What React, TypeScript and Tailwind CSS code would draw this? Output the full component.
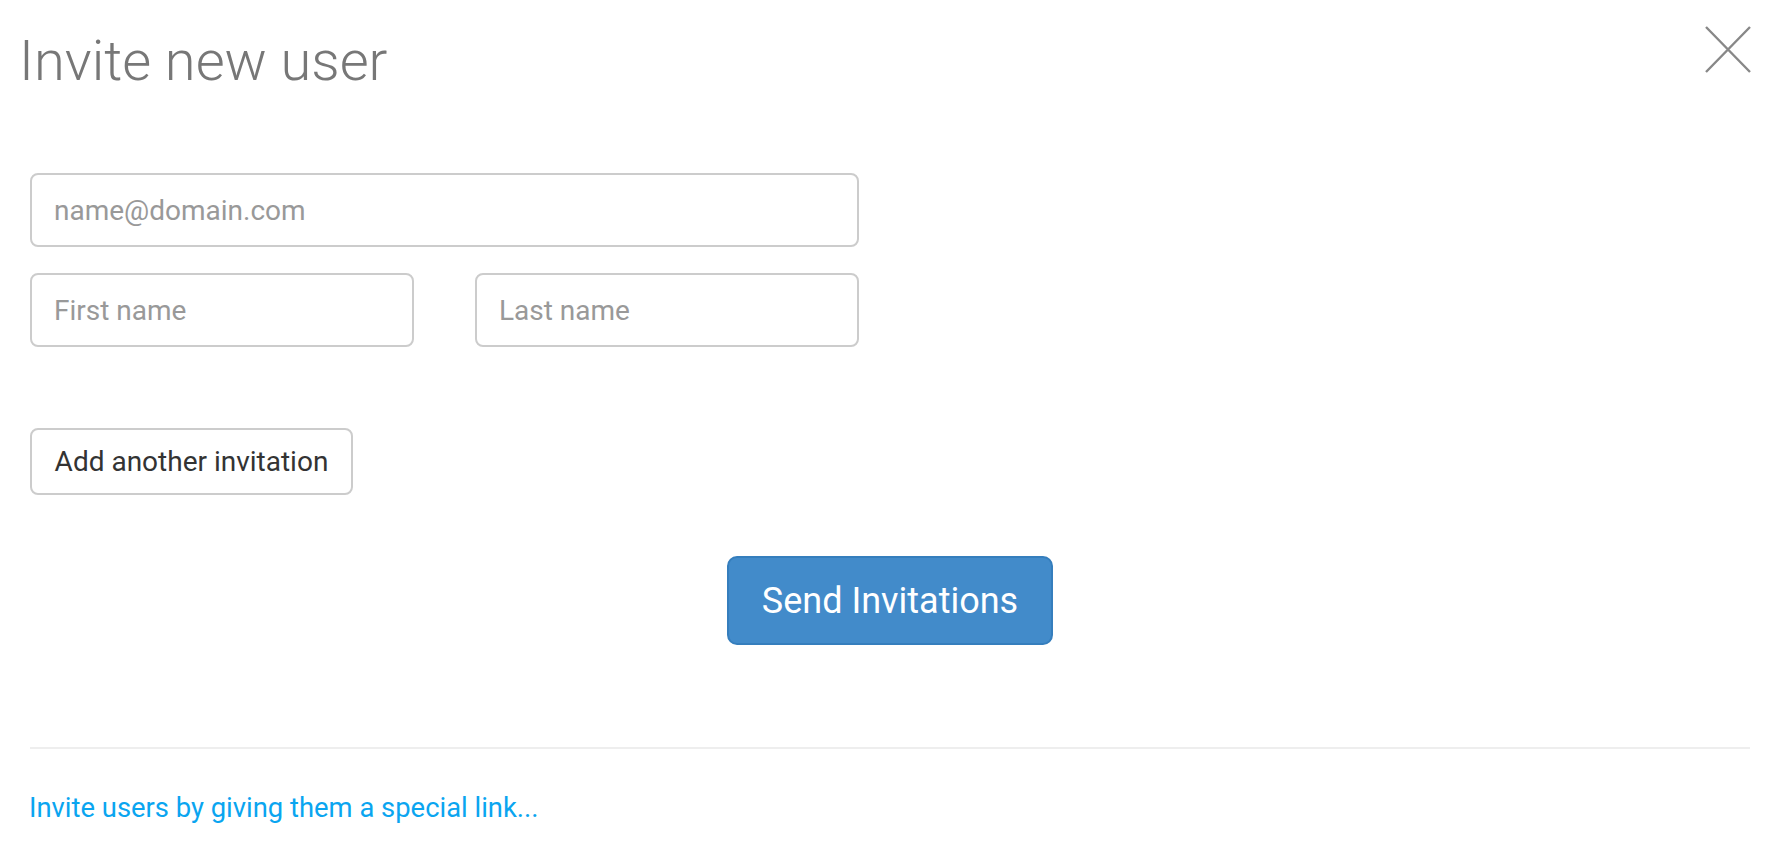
import React from "react";

export default function App() {
  return (
    <div className="relative w-[1780px] h-[856px] bg-white font-['Roboto','Liberation_Sans',sans-serif] overflow-hidden">
      <button
        aria-label="Close"
        className="absolute right-[29px] top-[26px] w-[46px] h-[47px]"
      >
        <svg width="46" height="47" viewBox="0 0 46 47" fill="none">
          <path d="M1 1L45 46M45 1L1 46" stroke="#888" strokeWidth="2.4" />
        </svg>
      </button>

      <div className="pl-[19px] pt-[33px]">
        <h1 className="text-[56px] leading-[56px] font-light text-[#777]">Invite new user</h1>
      </div>

      <div className="pl-[30px] w-[859px] mt-[84px] flex flex-col">
        <input
          className="h-[74px] w-full border-2 border-[#ccc] rounded-[8px] px-[22px] text-[28px] text-[#333] placeholder:text-[#999] outline-none"
          placeholder="name@domain.com"
        />
        <div className="mt-[26px] grid grid-cols-2 gap-[61px]">
          <input
            className="h-[74px] w-full border-2 border-[#ccc] rounded-[8px] px-[22px] text-[28px] text-[#333] placeholder:text-[#999] outline-none"
            placeholder="First name"
          />
          <input
            className="h-[74px] w-full border-2 border-[#ccc] rounded-[8px] px-[22px] text-[28px] text-[#333] placeholder:text-[#999] outline-none"
            placeholder="Last name"
          />
        </div>
        <div className="mt-[81px]">
          <button className="h-[67px] w-[323px] border-2 border-[#ccc] rounded-[8px] text-[28px] text-[#333] bg-white">
            Add another invitation
          </button>
        </div>
      </div>

      <div className="mt-[61px] flex justify-center">
        <button className="h-[89px] w-[326px] bg-[#428bca] border-2 border-[#357ebd] rounded-[10px] text-[36px] text-white">
          Send Invitations
        </button>
      </div>

      <div className="mt-[102px] ml-[30px] w-[1720px] h-[2px] bg-[#eee]" />

      <div className="mt-[45px] pl-[29px]">
        <a className="text-[27.4px] leading-[28px] text-[#0aa5f0]">Invite users by giving them a special link...</a>
      </div>
    </div>
  );
}
